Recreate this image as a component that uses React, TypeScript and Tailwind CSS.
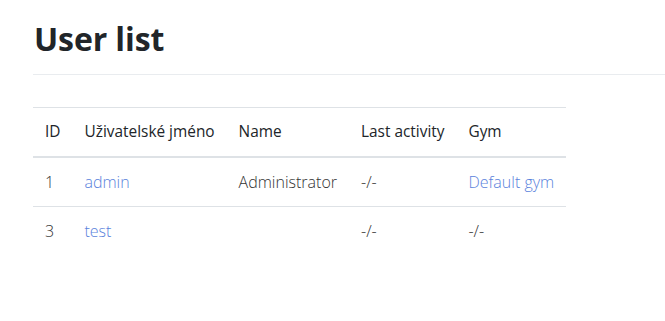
const users = [
  { id: 1, username: 'admin', name: 'Administrator', lastActivity: '-/-', gym: 'Default gym' },
  { id: 3, username: 'test', name: '', lastActivity: '-/-', gym: null },
];

export default function App() {
  return (
    <div className="min-h-screen bg-white pl-[33px] pt-[19px] font-['Open_Sans',sans-serif] text-[#212529]">
      <h1 className="pl-px text-[32px] font-bold leading-[40px] tracking-[-0.1px]">User list</h1>
      <hr className="mt-[15px] border-t border-[#e9ecef]" />
      <table className="mt-8 border-collapse border-t border-[#dee2e6] leading-6">
        <thead className="text-[15.4px]">
          <tr className="border-b-2 border-[#dee2e6]">
            <th className="p-3 text-left font-normal">ID</th>
            <th className="p-3 text-left font-normal">Uživatelské jméno</th>
            <th className="p-3 text-left font-normal">Name</th>
            <th className="p-3 text-left font-normal">Last activity</th>
            <th className="p-3 text-left font-normal">Gym</th>
          </tr>
        </thead>
        <tbody className="text-[16px] font-light text-[#333]">
          {users.map((u) => (
            <tr key={u.id} className="border-b border-[#dee2e6] last:border-b-0">
              <td className="p-3">{u.id}</td>
              <td className="p-3">
                <a href="#" className="text-[#5a82dc]">{u.username}</a>
              </td>
              <td className="p-3">{u.name}</td>
              <td className="p-3">{u.lastActivity}</td>
              <td className="p-3">
                {u.gym ? <a href="#" className="text-[#5a82dc]">{u.gym}</a> : '-/-'}
              </td>
            </tr>
          ))}
        </tbody>
      </table>
    </div>
  );
}
